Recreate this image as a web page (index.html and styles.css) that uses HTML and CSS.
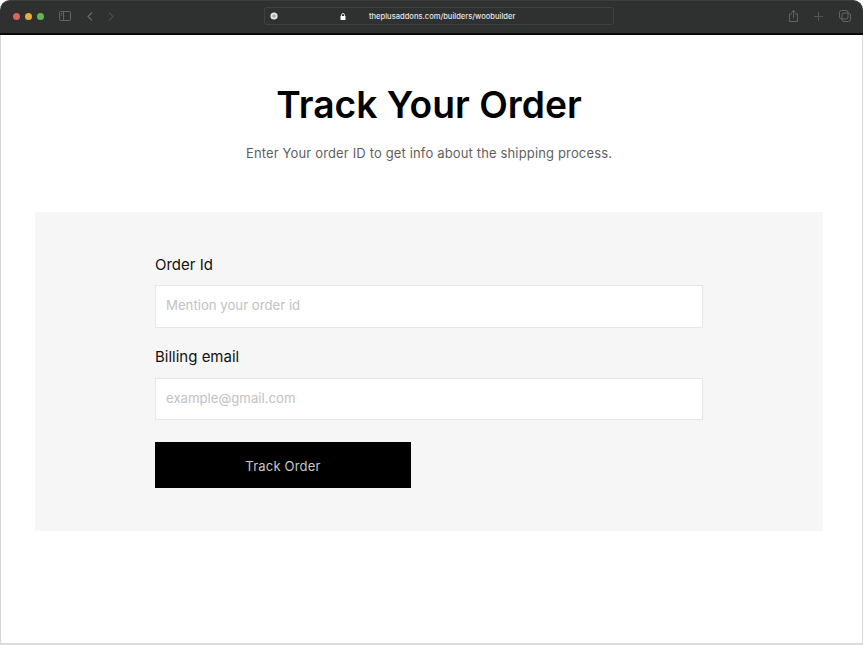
FILE: index.html
```html
<!DOCTYPE html>
<html lang="en">
<head>
<meta charset="UTF-8">
<title>Track Your Order</title>
<link rel="stylesheet" href="styles.css">
</head>
<body>

<div class="window">
    <!-- Browser toolbar -->
    <div class="toolbar">
        <div class="toolbar-left">
            <div class="lights">
                <span class="light red"></span>
                <span class="light yellow"></span>
                <span class="light green"></span>
            </div>
            <svg class="tool-icon sidebar-icon" width="12" height="10" viewBox="0 0 12 10" fill="none" stroke="#626464">
                <rect x="0.5" y="0.5" width="11" height="9" rx="1"/>
                <path d="M4.5 0.5v9M1.8 2.5h1.4M1.8 4.2h1.4"/>
            </svg>
            <svg class="tool-icon back-icon" width="6" height="9" viewBox="0 0 6 9" fill="none" stroke="#6a6c6c" stroke-width="1.1">
                <path d="M5 0.5L1 4.5 5 8.5"/>
            </svg>
            <svg class="tool-icon forward-icon" width="6" height="9" viewBox="0 0 6 9" fill="none" stroke="#4a4c4c" stroke-width="1.1">
                <path d="M1 0.5l4 4-4 4"/>
            </svg>
        </div>

        <div class="address-bar">
            <svg class="shield-icon" width="8" height="8" viewBox="0 0 8 8">
                <circle cx="4" cy="4" r="3.6" fill="#e4e4e4"/>
                <path d="M4 2v4M2 4h4" stroke="#8a8a8a" stroke-width="0.8"/>
            </svg>
            <svg class="lock-icon" width="6" height="7" viewBox="0 0 6 7">
                <path d="M1.5 3V2a1.5 1.5 0 0 1 3 0v1" fill="none" stroke="#fff" stroke-width="0.8"/>
                <rect x="0.5" y="3" width="5" height="4" rx="0.6" fill="#fff"/>
            </svg>
            <span class="url">theplusaddons.com/builders/woobuilder</span>
        </div>

        <div class="toolbar-right">
            <svg width="9" height="12" viewBox="0 0 9 12" fill="none" stroke="#626464">
                <path d="M3 4H0.5v7.5h8V4H6M4.5 8V0.5M2.5 2.5l2-2 2 2"/>
            </svg>
            <svg width="9" height="9" viewBox="0 0 9 9" fill="none" stroke="#565858">
                <path d="M4.5 0v9M0 4.5h9"/>
            </svg>
            <svg width="12" height="12" viewBox="0 0 12 12" fill="none" stroke="#626464">
                <rect x="0.5" y="0.5" width="8.5" height="8.5" rx="2"/>
                <rect x="3" y="3" width="8.5" height="8.5" rx="2"/>
            </svg>
        </div>
    </div>

    <div class="page">
        <h1>Track Your Order</h1>
        <p class="subtitle">Enter Your order ID to get info about the shipping process.</p>

        <div class="panel">
            <form class="track-form">
                <label class="first-label" for="orderId">Order Id</label>
                <input type="text" id="orderId" placeholder="Mention your order id">

                <label for="billingEmail">Billing email</label>
                <input class="short-input" type="text" id="billingEmail" placeholder="example@gmail.com">

                <button type="button">Track Order</button>
            </form>
        </div>
    </div>
</div>

</body>
</html>
```

FILE: styles.css
```css
* {
    box-sizing: border-box;
}
html, body {
    margin: 0;
    height: 645px;
    overflow: hidden;
    background: #fff;
}
body {
    font-family: 'Inter', sans-serif;
}
.window {
    height: 645px;
    display: flex;
    flex-direction: column;
}
.toolbar {
    height: 35px;
    flex: none;
    padding-bottom: 2px;
    background: #2f3131;
    border-top: 1px solid #3c3e3e;
    border-bottom: 2px solid #0c0808;
    border-radius: 10px 10px 0 0;
    display: grid;
    grid-template-columns: 264px 350px 1fr;
    align-items: center;
}
.toolbar-left {
    display: flex;
    align-items: center;
    padding-left: 13px;
}
.lights {
    display: flex;
    gap: 5px;
}
.light {
    width: 7px;
    height: 7px;
    border-radius: 50%;
}
.red { background: #e0605a; }
.yellow { background: #e6ac3f; }
.green { background: #5fb84e; }
.sidebar-icon { margin-left: 15px; }
.back-icon { margin-left: 16px; }
.forward-icon { margin-left: 15px; }
.address-bar {
    height: 18px;
    border: 1px solid #3f4141;
    border-radius: 3px;
    display: flex;
    align-items: center;
    padding-left: 5px;
}
.lock-icon { margin-left: 62px; }
.url {
    margin-left: 23px;
    font-size: 7.55px;
    font-weight: 500;
    color: #e4e4e4;
    white-space: nowrap;
}
.toolbar-right {
    display: flex;
    align-items: center;
    justify-content: flex-end;
    gap: 16px;
    padding-right: 12px;
}
.page {
    flex: 1;
    background: #fff;
    border-left: 1px solid #d6d6d6;
    border-right: 1px solid #d6d6d6;
    border-bottom: 2px solid #dcdcdc;
    padding: 48px 39px 0 34px;
    text-align: center;
}
h1 {
    margin: 0;
    font-size: 37.2px;
    line-height: 44px;
    font-weight: 600;
    color: #000;
}
.subtitle {
    margin: 16px 0 0;
    font-size: 13px;
    line-height: 20px;
    color: #5f5f5f;
    letter-spacing: 0.15px;
}
.panel {
    margin-top: 49px;
    height: 319px;
    background: #f6f6f6;
    padding: 43px 120px 0;
    text-align: left;
}
.track-form {
    width: 548px;
    display: flex;
    flex-direction: column;
}
label {
    margin-bottom: 11px;
    font-size: 15px;
    line-height: 20px;
    color: #111;
}
.first-label {
    margin-bottom: 10px;
}
input {
    height: 43px;
    margin-bottom: 19px;
    padding: 0 10px 3px;
    border: 1px solid #e6e6e6;
    background: #fff;
    font-family: inherit;
    font-size: 13.2px;
}
.short-input {
    height: 42px;
}
input::placeholder {
    color: #c2c2c2;
    opacity: 1;
}
button {
    width: 256px;
    height: 46px;
    margin-top: 3px;
    padding-top: 2px;
    background: #000;
    border: none;
    color: #c8c8c8;
    font-family: inherit;
    font-size: 13px;
    letter-spacing: 0.2px;
}
```
